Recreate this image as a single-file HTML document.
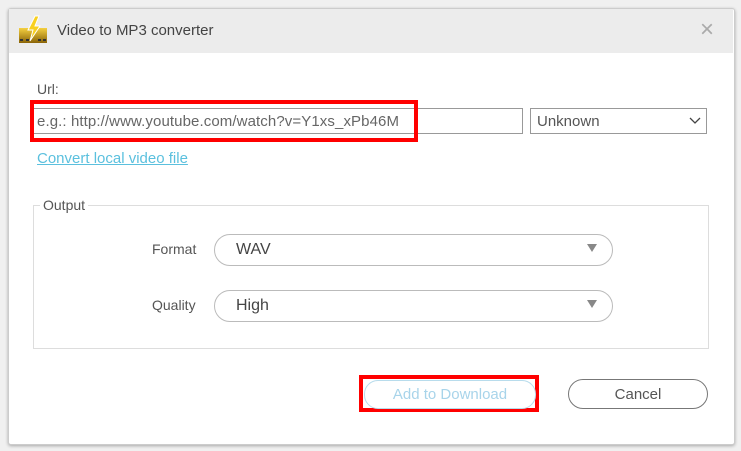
<html><head><style>
body{margin:0;width:741px;height:451px;background:#f0f0f0;font-family:"Liberation Sans",sans-serif;position:relative;overflow:hidden}
.a{position:absolute}
.win{left:8px;top:8px;width:725px;height:435px;background:#fff;border:1px solid #ccc;border-radius:3px;box-shadow:0 1px 3px rgba(0,0,0,.3)}
.t{font-size:15px;color:#555}
</style></head><body>
<div class="a win"></div>
<div class="a" style="left:9px;top:9px;width:724px;height:44px;background:#ececec"></div>
<svg class="a" style="left:18px;top:15px" width="32" height="30" viewBox="0 0 32 30"><defs><linearGradient id="g" x1="0" x2="0" y1="0" y2="1"><stop offset="0" stop-color="#f5d040"/><stop offset="1" stop-color="#8a6408"/></linearGradient></defs><rect x="1" y="13" width="28" height="15" fill="url(#g)"/><path d="M17 1 L10 15 H15 L12 26 L22 11 H17 L21 1Z" fill="#f8d020" stroke="#fff" stroke-width="1"/><g fill="#333"><rect x="2" y="24" width="3" height="2"/><rect x="8" y="24" width="3" height="2"/><rect x="20" y="24" width="3" height="2"/><rect x="25" y="24" width="3" height="2"/></g></svg>
<div class="a t" style="left:57px;top:22px;font-size:15px;color:#444">Video to MP3 converter</div>
<div class="a" style="left:700px;top:18px;font-size:24px;color:#aaa;line-height:24px">×</div>
<div class="a t" style="left:37px;top:81px;font-size:14px">Url:</div>
<div class="a" style="left:33px;top:108px;width:488px;height:24px;border:1px solid #999"></div>
<div class="a t" style="left:37px;top:113px;font-size:15px;color:#666;letter-spacing:0.1px">e.g.: http://www.youtube.com/watch?v=Y1xs_xPb46M</div>
<div class="a" style="left:30px;top:100px;width:380px;height:34px;border:4px solid #f00"></div>
<div class="a" style="left:530px;top:108px;width:175px;height:24px;border:1px solid #999"></div>
<div class="a t" style="left:537px;top:113px">Unknown</div>
<svg class="a" style="left:689px;top:117px" width="12" height="8"><path d="M1 1 L6 6 L11 1" stroke="#444" fill="none" stroke-width="1.3"/></svg>
<div class="a" style="left:37px;top:150px;font-size:15px;color:#5bc0de;text-decoration:underline">Convert local video file</div>
<div class="a" style="left:33px;top:205px;width:674px;height:142px;border:1px solid #ddd"></div>
<div class="a t" style="left:40px;top:197px;background:#fff;padding:0 3px;font-size:14px">Output</div>
<div class="a t" style="left:152px;top:241px;font-size:14px">Format</div>
<div class="a" style="left:214px;top:234px;width:397px;height:30px;border:1px solid #bbb;border-radius:16px"></div>
<div class="a t" style="left:236px;top:241px;font-size:16px;color:#444">WAV</div>
<div class="a" style="left:587px;top:244px;width:0;height:0;border-left:5px solid transparent;border-right:5px solid transparent;border-top:8px solid #888"></div>
<div class="a t" style="left:152px;top:297px;font-size:14px">Quality</div>
<div class="a" style="left:214px;top:290px;width:397px;height:30px;border:1px solid #bbb;border-radius:16px"></div>
<div class="a t" style="left:236px;top:297px;font-size:16px;color:#444">High</div>
<div class="a" style="left:587px;top:300px;width:0;height:0;border-left:5px solid transparent;border-right:5px solid transparent;border-top:8px solid #888"></div>
<div class="a" style="left:359px;top:375px;width:172px;height:29px;border:4px solid #f00"></div>
<div class="a" style="left:364px;top:380px;width:170px;height:27px;border:1px solid #b8dcec;border-radius:14px"></div>
<div class="a" style="left:364px;top:386px;width:172px;text-align:center;font-size:15px;color:#a8d4ea">Add to Download</div>
<div class="a" style="left:568px;top:379px;width:138px;height:28px;border:1px solid #777;border-radius:15px"></div>
<div class="a" style="left:568px;top:386px;width:140px;text-align:center;font-size:15px;color:#555">Cancel</div>
</body></html>
